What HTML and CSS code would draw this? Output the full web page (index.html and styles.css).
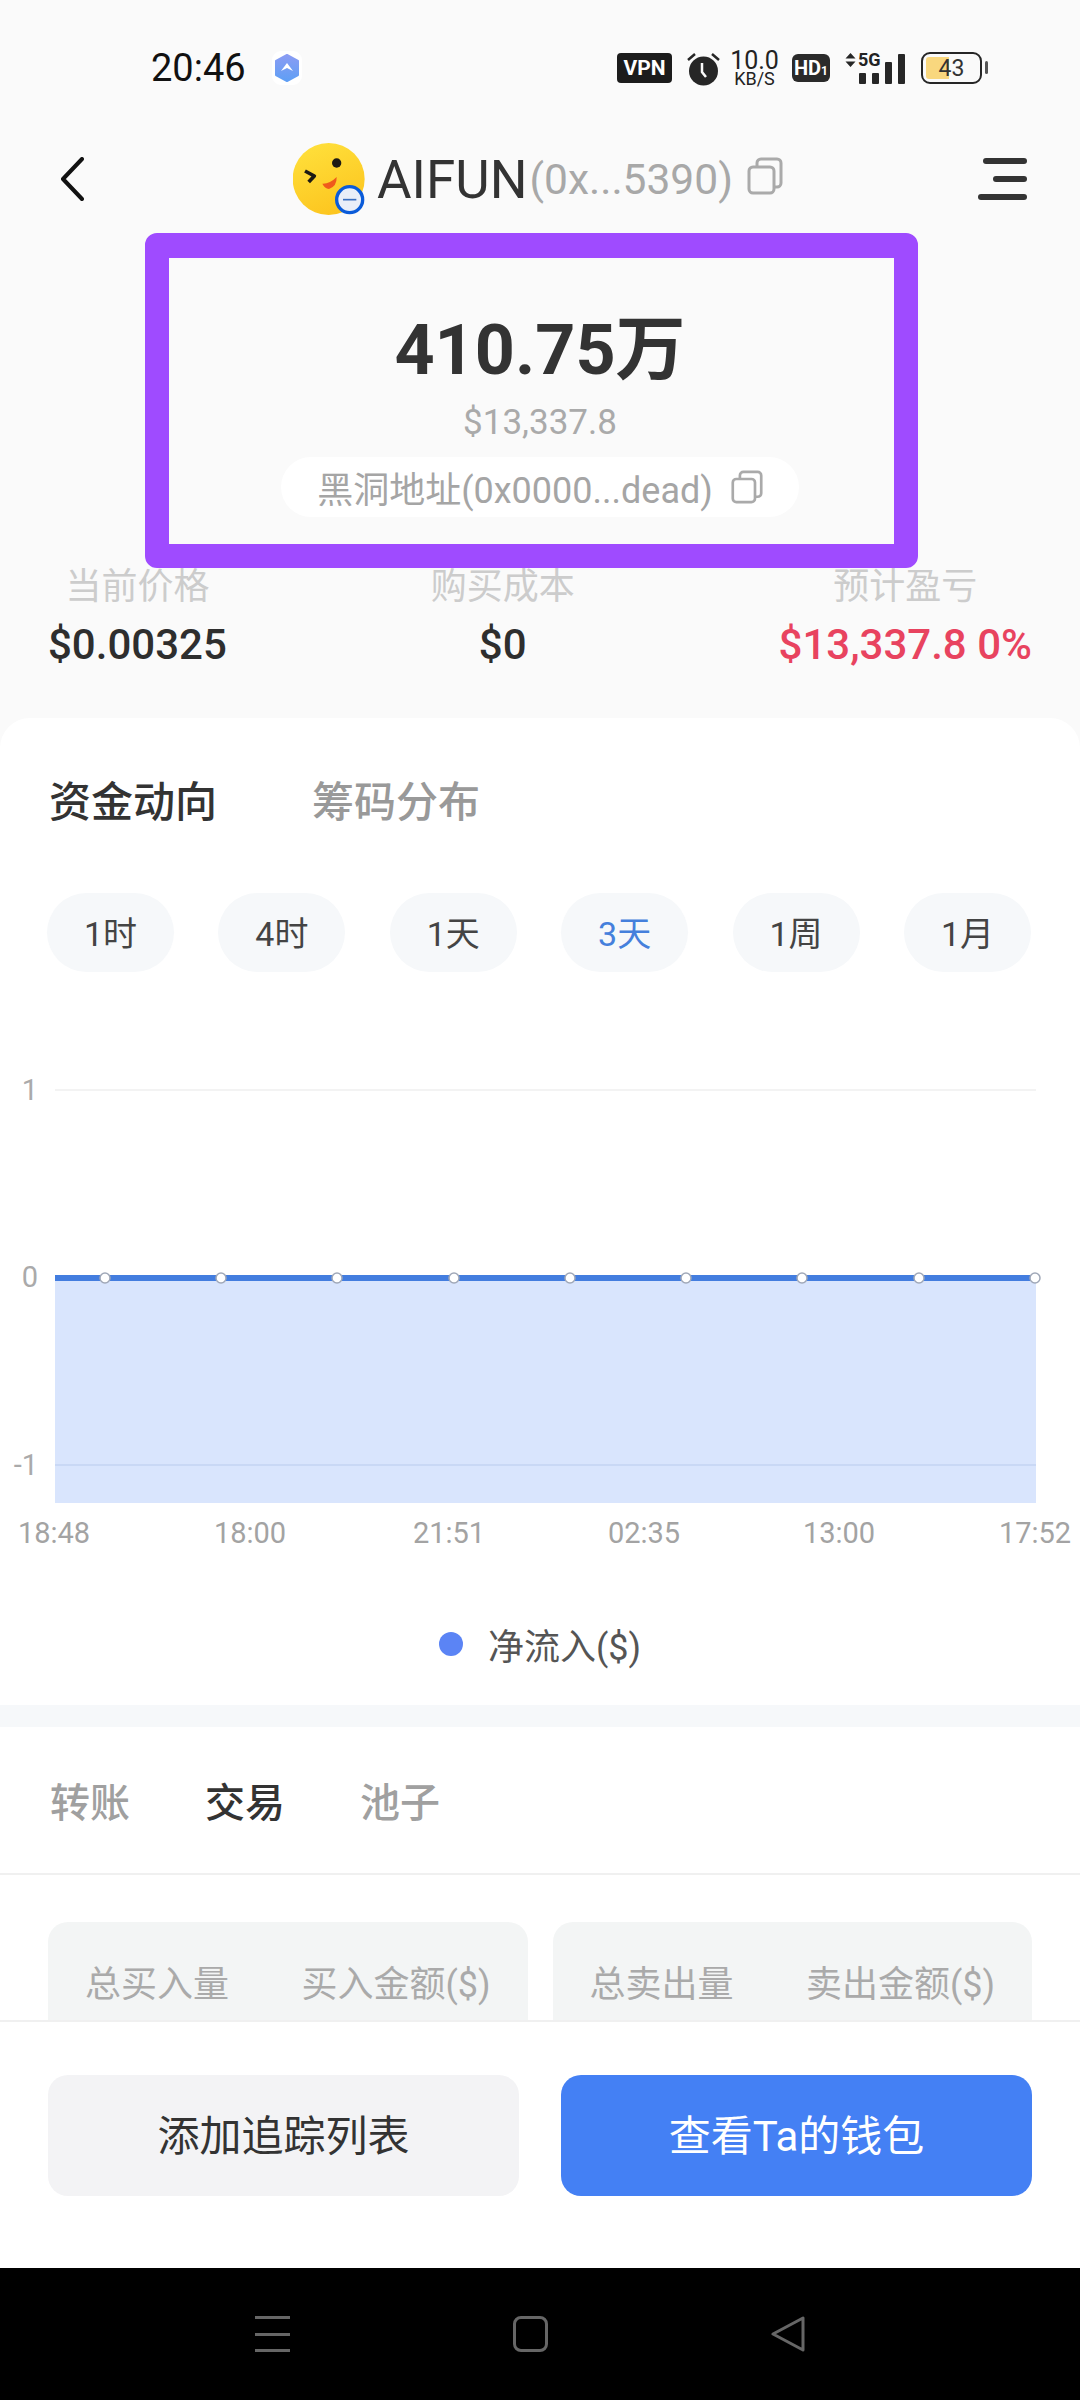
FILE: index.html
```html
<!DOCTYPE html>
<html lang="zh">
<head>
<meta charset="utf-8">
<title>AIFUN</title>
<link rel="stylesheet" href="styles.css">
</head>
<body>
<svg class="defs" width="0" height="0" aria-hidden="true">
  <symbol id="copy" viewBox="0 0 36 38">
    <rect x="2" y="10" width="25" height="26" rx="4" fill="none" stroke="currentColor" stroke-width="3"/>
    <path d="M10 9V6a4 4 0 0 1 4-4h16a4 4 0 0 1 4 4v20a4 4 0 0 1-4 4h-2" fill="none" stroke="currentColor" stroke-width="3"/>
  </symbol>
</svg>
<div class="app">
  <div class="main">
    <div class="status">
      <div class="status-left">
        <span class="time">20:46</span>
        <svg class="app-icon" viewBox="0 0 30 34">
          <defs><linearGradient id="hex" x1="0" y1="0" x2="0" y2="1"><stop offset="0" stop-color="#8a9cf3"/><stop offset="1" stop-color="#5f9ff5"/></linearGradient></defs>
          <rect x="0" y="0" width="30" height="34" rx="9" fill="#fff"/>
          <path d="M15 4l11 6v14l-11 6-11-6V10z" fill="url(#hex)" stroke="url(#hex)" stroke-width="2" stroke-linejoin="round"/>
          <path d="M9 20l6-8 6 8-6-3z" fill="#fff"/>
        </svg>
      </div>
      <div class="status-right">
        <span class="badge vpn">VPN</span>
        <svg class="alarm" viewBox="0 0 33 35">
          <circle cx="16.500" cy="20" r="14.500" fill="#262626"/>
          <path d="M1 9l7-6M32 9l-7-6" stroke="#262626" stroke-width="2.500" fill="none"/>
          <path d="M15 12v9l4 5" stroke="#fafafa" stroke-width="2.500" fill="none"/>
        </svg>
        <span class="speed"><b>10.0</b><i>KB/S</i></span>
        <span class="badge hd">HD<small>1</small></span>
        <span class="signal">
          <svg class="arrows" viewBox="0 0 11 14"><path d="M5.500 0l5 5.500h-10zM5.500 14l5-5.500h-10z" fill="#262626"/></svg>
          <span class="five-g">5G</span>
          <span class="bars">
            <i class="bar b1"></i><i class="bar b2"></i><i class="bar b3"></i><i class="bar b4"></i>
          </span>
        </span>
        <span class="battery"><span class="level"></span><span class="pct">43</span></span>
      </div>
    </div>

    <div class="header">
      <svg class="back" viewBox="0 0 24 44"><path d="M22 2L3 22l19 20" fill="none" stroke="#111" stroke-width="4" stroke-linecap="round" stroke-linejoin="round"/></svg>
      <div class="title">
        <svg class="avatar" viewBox="70 57 216 216">
          <defs><linearGradient id="face" x1="0.300" y1="0" x2="0.700" y2="1"><stop offset="0" stop-color="#ffdf3a"/><stop offset="1" stop-color="#fcc41e"/></linearGradient></defs>
          <circle cx="177" cy="165" r="108" fill="url(#face)"/>
          <circle cx="201" cy="117" r="14" fill="#1d1a14"/>
          <path d="M106 141l28 15-17 18" fill="none" stroke="#1d1a14" stroke-width="11" stroke-linejoin="round"/>
          <path d="M158 179q22 1 43-20q1 28-23 36q-13-2-20-16z" fill="#ef5a1c"/>
          <circle cx="240" cy="227" r="39" fill="#e9eef8" stroke="#0a5bd9" stroke-width="10"/>
          <path d="M220 227h40" stroke="#3a6fc0" stroke-width="5"/>
        </svg>
        <span class="name">AIFUN</span>
        <span class="addr">(0x...5390)</span>
        <svg class="copy copy-lg"><use href="#copy"/></svg>
      </div>
      <div class="menu"><i class="m m1"></i><i class="m m2"></i><i class="m m3"></i></div>
    </div>

    <div class="hero">
      <div class="amount">410.75万</div>
      <div class="usd">$13,337.8</div>
      <div class="pill-addr">
        <span>黑洞地址(0x0000...dead)</span>
        <svg class="copy copy-sm"><use href="#copy"/></svg>
      </div>
      <div class="highlight"></div>
    </div>

    <div class="stats">
      <div class="stat"><div class="stat-label">当前价格</div><div class="stat-value">$0.00325</div></div>
      <div class="stat"><div class="stat-label">购买成本</div><div class="stat-value">$0</div></div>
      <div class="stat"><div class="stat-label">预计盈亏</div><div class="stat-value red">$13,337.8 0%</div></div>
    </div>

    <div class="card">
      <div class="seg-tabs">
        <span class="seg active">资金动向</span>
        <span class="seg">筹码分布</span>
      </div>
      <div class="ranges">
        <span class="range">1时</span>
        <span class="range">4时</span>
        <span class="range">1天</span>
        <span class="range on">3天</span>
        <span class="range">1周</span>
        <span class="range">1月</span>
      </div>
      <svg class="chart" viewBox="0 1040 1080 520">
        <line class="grid" x1="55" y1="1090" x2="1036" y2="1090"/>
        <rect class="area" x="55" y="1281" width="981" height="222"/>
        <line class="grid-on" x1="55" y1="1465" x2="1036" y2="1465"/>
        <line class="flow" x1="55" y1="1278" x2="1036" y2="1278"/>
        <g class="dots">
          <circle cx="105" cy="1278" r="5"/><circle cx="221" cy="1278" r="5"/><circle cx="337" cy="1278" r="5"/>
          <circle cx="454" cy="1278" r="5"/><circle cx="570" cy="1278" r="5"/><circle cx="686" cy="1278" r="5"/>
          <circle cx="802" cy="1278" r="5"/><circle cx="919" cy="1278" r="5"/><circle cx="1035" cy="1278" r="5"/>
        </g>
        <g class="ylab">
          <text x="38" y="1100">1</text>
          <text x="38" y="1287">0</text>
          <text x="38" y="1475">-1</text>
        </g>
        <g class="xlab">
          <text x="54" y="1543">18:48</text>
          <text x="250" y="1543">18:00</text>
          <text x="449" y="1543">21:51</text>
          <text x="644" y="1543">02:35</text>
          <text x="839" y="1543">13:00</text>
          <text x="1035" y="1543">17:52</text>
        </g>
      </svg>
      <div class="legend"><i class="legend-dot"></i><span>净流入($)</span></div>
      <div class="divider"></div>
      <div class="sub-tabs">
        <span class="sub">转账</span>
        <span class="sub active">交易</span>
        <span class="sub">池子</span>
      </div>
      <div class="totals">
        <div class="total"><span>总买入量</span><span>买入金额($)</span></div>
        <div class="total"><span>总卖出量</span><span>卖出金额($)</span></div>
      </div>
    </div>
  </div>

  <div class="actions">
    <div class="btn ghost">添加追踪列表</div>
    <div class="btn primary">查看Ta的钱包</div>
  </div>

  <div class="nav">
    <div class="nav-menu"><i></i><i></i><i></i></div>
    <div class="nav-home"></div>
    <svg class="nav-back" viewBox="0 0 34 36"><path d="M32 2v32L2 18z" fill="none" stroke="#666" stroke-width="3" stroke-linejoin="round"/></svg>
  </div>
</div>
</body>
</html>
```
FILE: styles.css
```css
* { box-sizing: border-box; }
html, body { margin: 0; padding: 0; }
body {
  width: 1080px;
  height: 2400px;
  overflow: hidden;
  background: #fafafa;
  font-family: Roboto, "Noto Sans CJK SC", sans-serif;
  color: #333;
}
i { font-style: normal; display: block; }
.defs { position: absolute; }
.app { display: flex; flex-direction: column; height: 2400px; }
.main { flex: 1; min-height: 0; overflow: hidden; }

/* status bar */
.status {
  height: 130px;
  padding: 50px 98px 0 151px;
  display: flex;
  justify-content: space-between;
  align-items: flex-start;
}
.status-left { display: flex; align-items: center; gap: 26px; height: 36px; }
.time { font-size: 38px; color: #111; line-height: 36px; }
.app-icon { width: 30px; height: 34px; }
.status-right { display: flex; align-items: center; height: 36px; }
.badge {
  background: #1c1c1c;
  color: #fff;
  font-weight: 700;
  border-radius: 4px;
  display: flex;
  align-items: center;
  justify-content: center;
}
.vpn { width: 55px; height: 30px; font-size: 21px; }
.alarm { width: 33px; height: 35px; margin-left: 15px; }
.speed { width: 47px; margin-left: 11px; display: flex; flex-direction: column; align-items: center; color: #222; }
.speed b { font-weight: 400; font-size: 25px; line-height: 20px; }
.speed i { font-size: 18px; line-height: 15px; }
.hd { width: 38px; height: 28px; margin-left: 14px; font-size: 20px; border-radius: 6px; background: #2a2a2a; }
.hd small { font-size: 12px; margin-top: 6px; }
.signal { width: 60px; height: 32px; margin-left: 15px; position: relative; display: flex; }
.arrows { width: 11px; height: 14px; margin-top: 1px; }
.five-g { font-size: 18px; font-weight: 700; line-height: 16px; margin-left: 2px; color: #222; }
.bars { position: absolute; right: 0; bottom: 0; display: flex; align-items: flex-end; gap: 6px; height: 32px; }
.bar { width: 7px; background: #262626; border-radius: 1px; }
.b1 { height: 11px; }
.b2 { height: 11px; }
.b3 { height: 22px; }
.b4 { height: 30px; }
.battery {
  width: 61px;
  height: 32px;
  margin-left: 16px;
  border: 2.500px solid #262626;
  border-radius: 9px;
  position: relative;
  display: flex;
  align-items: center;
  justify-content: center;
}
.battery::after {
  content: "";
  position: absolute;
  right: -8px;
  top: 7px;
  width: 3px;
  height: 13px;
  background: #555;
  border-radius: 2px;
}
.level { position: absolute; left: 3px; top: 3px; bottom: 3px; width: 23px; background: #f9d77e; border-radius: 3px 0 0 3px; }
.pct { position: relative; font-size: 23px; color: #333; }

/* header */
.header {
  height: 98px;
  padding: 0 53px 0 60px;
  display: flex;
  align-items: center;
}
.back { width: 24px; height: 44px; }
.title { display: flex; align-items: center; margin-left: 209px; }
.avatar { width: 72px; height: 72px; }
.name { font-size: 53px; color: #333; margin-left: 12px; margin-top: 2px; line-height: 60px; }
.addr { font-size: 42.500px; color: #a8a8a8; line-height: 60px; margin-left: 2px; margin-top: 2px; }
.copy { color: #aaa; display: block; }
.copy-lg { width: 36px; height: 38px; margin-left: 14px; margin-top: -6px; }
.menu { width: 49px; margin-left: auto; display: flex; flex-direction: column; align-items: flex-end; gap: 12px; }
.m { height: 6px; background: #333; border-radius: 3px; }
.m1 { width: 44px; }
.m2 { width: 34px; }
.m3 { width: 49px; }

/* hero */
.hero {
  position: relative;
  height: 339px;
  padding-top: 80px;
  display: flex;
  flex-direction: column;
  align-items: center;
}
.amount { font-size: 70px; font-weight: 700; line-height: 84px; color: #333; }
.usd { font-size: 35px; line-height: 40px; color: #aaa; margin-top: 11px; }
.pill-addr {
  width: 518px;
  height: 60px;
  margin-top: 14px;
  background: #fff;
  border-radius: 30px;
  display: flex;
  align-items: center;
  justify-content: center;
  gap: 18px;
  font-size: 36px;
  color: #a5a5a5;
}
.copy-sm { width: 32px; height: 34px; }
.highlight {
  position: absolute;
  left: 145px;
  top: 5px;
  width: 773px;
  height: 335px;
  border: solid #9f4bff;
  border-width: 25px 24px 24px;
  border-radius: 12px;
}

/* stats */
.stats {
  padding: 0 48px;
  display: flex;
  justify-content: space-between;
  height: 151px;
}
.stat { display: flex; flex-direction: column; align-items: center; }
.stat-label { font-size: 36px; line-height: 40px; color: #ccc; margin-bottom: 14px; }
.stat-value { font-size: 42px; font-weight: 500; line-height: 48px; color: #2e2e2e; }
.red { color: #e8435f; }

/* card */
.card { background: #fff; border-radius: 30px 30px 0 0; padding-top: 59px; }
.seg-tabs { display: flex; gap: 95px; padding: 0 49px; }
.seg { font-size: 42px; font-weight: 500; line-height: 52px; color: #999; }
.seg.active { color: #333; }
.ranges { display: flex; justify-content: space-between; padding: 0 49px 0 47px; margin-top: 64px; }
.range {
  width: 127px;
  height: 79px;
  border-radius: 40px;
  background: #f6f8fa;
  display: flex;
  align-items: center;
  justify-content: center;
  font-size: 34px;
  padding-bottom: 2px;
  color: #444;
}
.range.on { color: #4580dc; }

/* chart */
.chart { display: block; width: 1080px; height: 520px; margin-top: 68px; }
.grid { stroke: #f3f3f3; stroke-width: 2; }
.grid-on { stroke: #c9d8f5; stroke-width: 2; }
.area { fill: #d9e5fd; }
.flow { stroke: #437ddf; stroke-width: 6; }
.dots circle { fill: #fff; stroke: #a0a8b8; stroke-width: 1.500; }
.ylab text { font-size: 29px; fill: #aaa; text-anchor: end; font-family: Roboto, sans-serif; }
.xlab text { font-size: 29px; fill: #a3a3a3; text-anchor: middle; font-family: Roboto, sans-serif; }

.legend {
  height: 145px;
  padding-top: 23px;
  display: flex;
  align-items: center;
  justify-content: center;
  gap: 25px;
  font-size: 36px;
  color: #555;
}
.legend-dot { width: 24px; height: 24px; border-radius: 50%; background: #5b84f5; }
.divider { height: 22px; background: #f6f8fa; }

/* lower tabs */
.sub-tabs {
  height: 148px;
  padding: 0 50px;
  border-bottom: 2px solid #f0f0f0;
  display: flex;
  align-items: center;
  gap: 75px;
}
.sub { font-size: 40px; font-weight: 500; color: #a0a0a0; }
.sub.active { color: #333; }
.totals {
  display: grid;
  grid-template-columns: 1fr 1fr;
  gap: 25px;
  padding: 0 48px;
  margin-top: 47px;
}
.total {
  height: 200px;
  border-radius: 20px;
  background: #f3f5f5;
  padding: 38px 37px 0;
  display: flex;
  justify-content: space-between;
  font-size: 36px;
  line-height: 50px;
  color: #aaa;
}

/* actions */
.actions {
  height: 248px;
  background: #fff;
  border-top: 2px solid #f0f0f0;
  padding: 53px 48px 0;
  display: flex;
  gap: 42px;
}
.btn {
  flex: 1;
  height: 121px;
  border-radius: 20px;
  display: flex;
  align-items: center;
  justify-content: center;
  font-size: 42px;
  padding-bottom: 6px;
}
.ghost { background: #f3f3f5; color: #333; }
.primary { background: #4480f4; color: #fff; }

/* nav bar */
.nav {
  height: 132px;
  background: #000;
  position: relative;
  padding: 48px 275px 0 255px;
  display: flex;
  justify-content: space-between;
  align-items: flex-start;
}
.nav-menu { width: 35px; height: 36px; display: flex; flex-direction: column; justify-content: space-between; }
.nav-menu i { height: 3px; background: #666; }
.nav-home { width: 35px; height: 36px; border: 3px solid #666; border-radius: 8px; }
.nav-back { width: 34px; height: 36px; }
```
